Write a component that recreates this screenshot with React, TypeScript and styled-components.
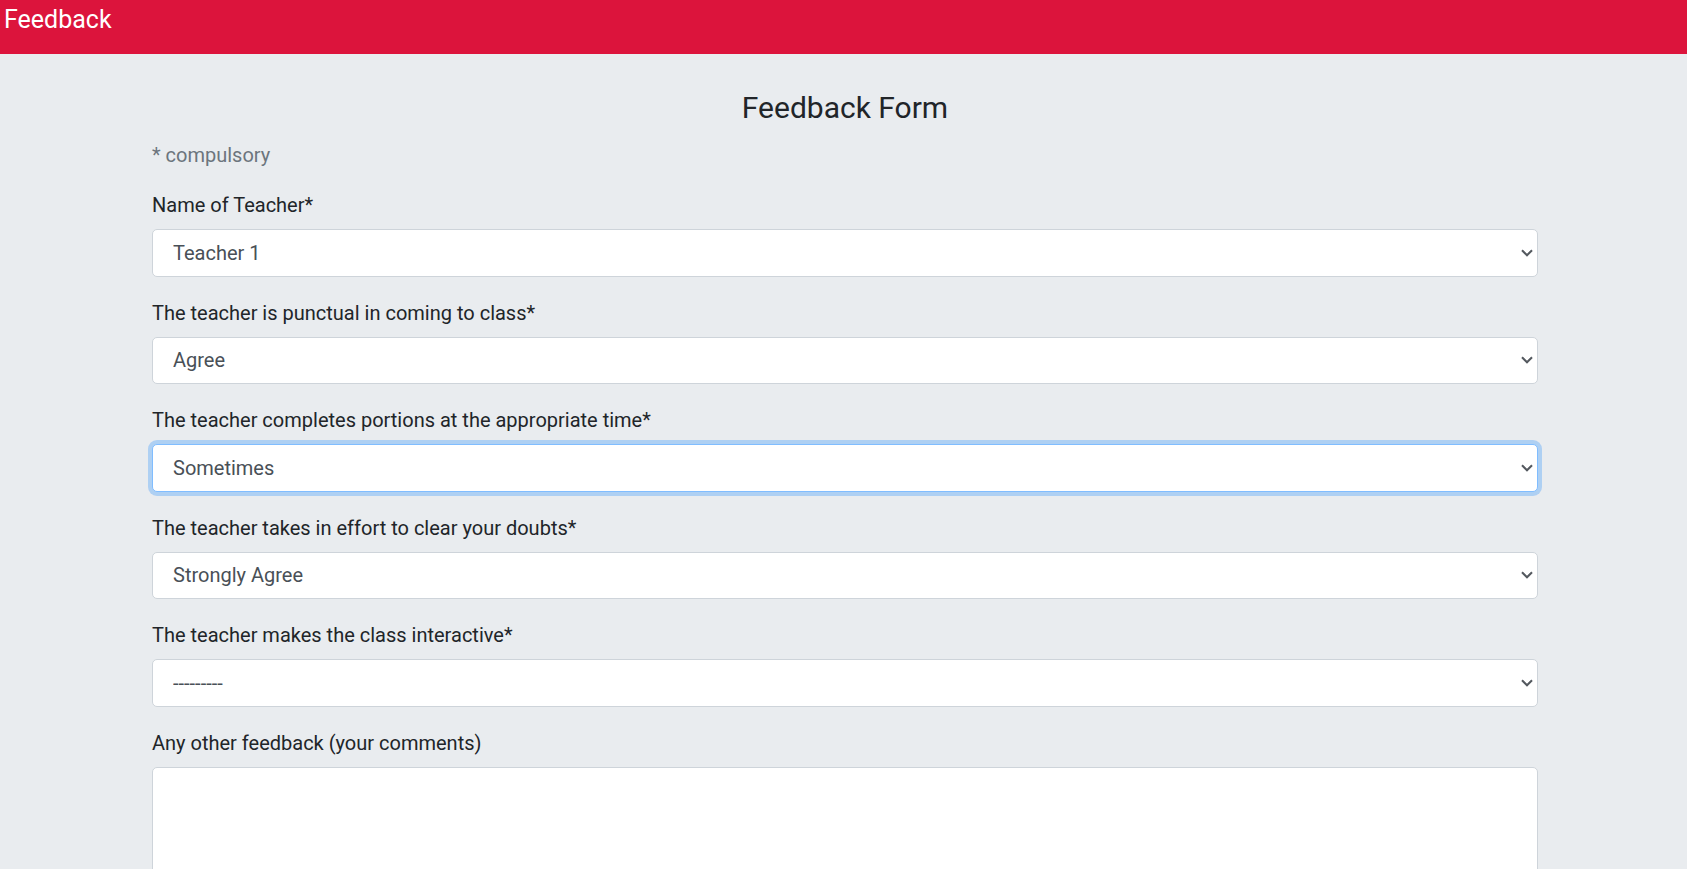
import React from "react";
import styled, { createGlobalStyle, css } from "styled-components";

const GlobalStyle = createGlobalStyle`
  html, body {
    margin: 0;
    padding: 0;
    background: #e9ecef;
  }
  body {
    font-family: Roboto, "Liberation Sans", Arial, sans-serif;
    font-size: 20px;
    line-height: 1.5;
    color: #212529;
  }
  * { box-sizing: border-box; }
`;

const chevron =
  "data:image/svg+xml;utf8," +
  encodeURIComponent(
    "<svg xmlns='http://www.w3.org/2000/svg' width='12' height='8' viewBox='0 0 12 8'><path d='M1 1.2 L6 6.2 L11 1.2' fill='none' stroke='#555a60' stroke-width='2.1'/></svg>"
  );

const Page = styled.div`
  min-height: 100vh;
  background: #e9ecef;
`;

const Header = styled.header`
  height: 54px;
  background: #dc143c;
  color: #ffffff;
  padding: 1px 0 0 4px;
`;

const Brand = styled.div`
  font-size: 25px;
  line-height: 37.5px;
  font-weight: 400;
`;

const Container = styled.main`
  width: 1389px;
  margin: 0 auto;
  padding: 36px 0 0 3px;
`;

const Title = styled.h4`
  margin: 0 0 14px;
  font-size: 30px;
  line-height: 36px;
  font-weight: 400;
  text-align: center;
  color: #212529;
`;

const Note = styled.p`
  margin: 0 0 20px;
  color: #6c757d;
  line-height: 30px;
`;

const Group = styled.div`
  margin-bottom: 21px;
`;

const Label = styled.label`
  display: block;
  margin-bottom: 9px;
  line-height: 30px;
`;

const fieldBase = css`
  display: block;
  width: 100%;
  font-family: inherit;
  font-size: 20px;
  line-height: 1.5;
  color: #495057;
  background-color: #ffffff;
  border: 1px solid #ced4da;
  border-radius: 5px;
  padding: 7.5px 15px;
  outline: none;
`;

const Select = styled.select<{ $focused?: boolean }>`
  ${fieldBase}
  height: 47.5px;
  padding-left: 20px;
  padding-right: 24px;
  appearance: none;
  -webkit-appearance: none;
  background-image: url("${chevron}");
  background-repeat: no-repeat;
  background-position: right 4px center;
  background-size: 12px 8px;
  ${(p) =>
    p.$focused &&
    css`
      border-color: #80bdff;
      box-shadow: 0 0 0 4px rgba(0, 123, 255, 0.25);
    `}
`;

const TextArea = styled.textarea`
  ${fieldBase}
  height: 160px;
  resize: vertical;
`;

const scale = ["---------", "Strongly Agree", "Agree", "Sometimes", "Disagree", "Strongly Disagree"];

const fields = [
  { label: "Name of Teacher*", value: "Teacher 1", options: ["---------", "Teacher 1", "Teacher 2", "Teacher 3"] },
  { label: "The teacher is punctual in coming to class*", value: "Agree", options: scale },
  { label: "The teacher completes portions at the appropriate time*", value: "Sometimes", focused: true, options: scale },
  { label: "The teacher takes in effort to clear your doubts*", value: "Strongly Agree", options: scale },
  { label: "The teacher makes the class interactive*", value: "---------", options: scale },
];

export default function App() {
  return (
    <>
      <GlobalStyle />
      <Page>
        <Header>
          <Brand>Feedback</Brand>
        </Header>
        <Container>
          <Title>Feedback Form</Title>
          <Note>* compulsory</Note>
          {fields.map((f, i) => (
            <Group key={i}>
              <Label htmlFor={`f${i}`}>{f.label}</Label>
              <Select id={`f${i}`} defaultValue={f.value} $focused={f.focused}>
                {f.options.map((o) => (
                  <option key={o} value={o}>
                    {o}
                  </option>
                ))}
              </Select>
            </Group>
          ))}
          <Group>
            <Label htmlFor="comments">Any other feedback (your comments)</Label>
            <TextArea id="comments" rows={3} />
          </Group>
        </Container>
      </Page>
    </>
  );
}
